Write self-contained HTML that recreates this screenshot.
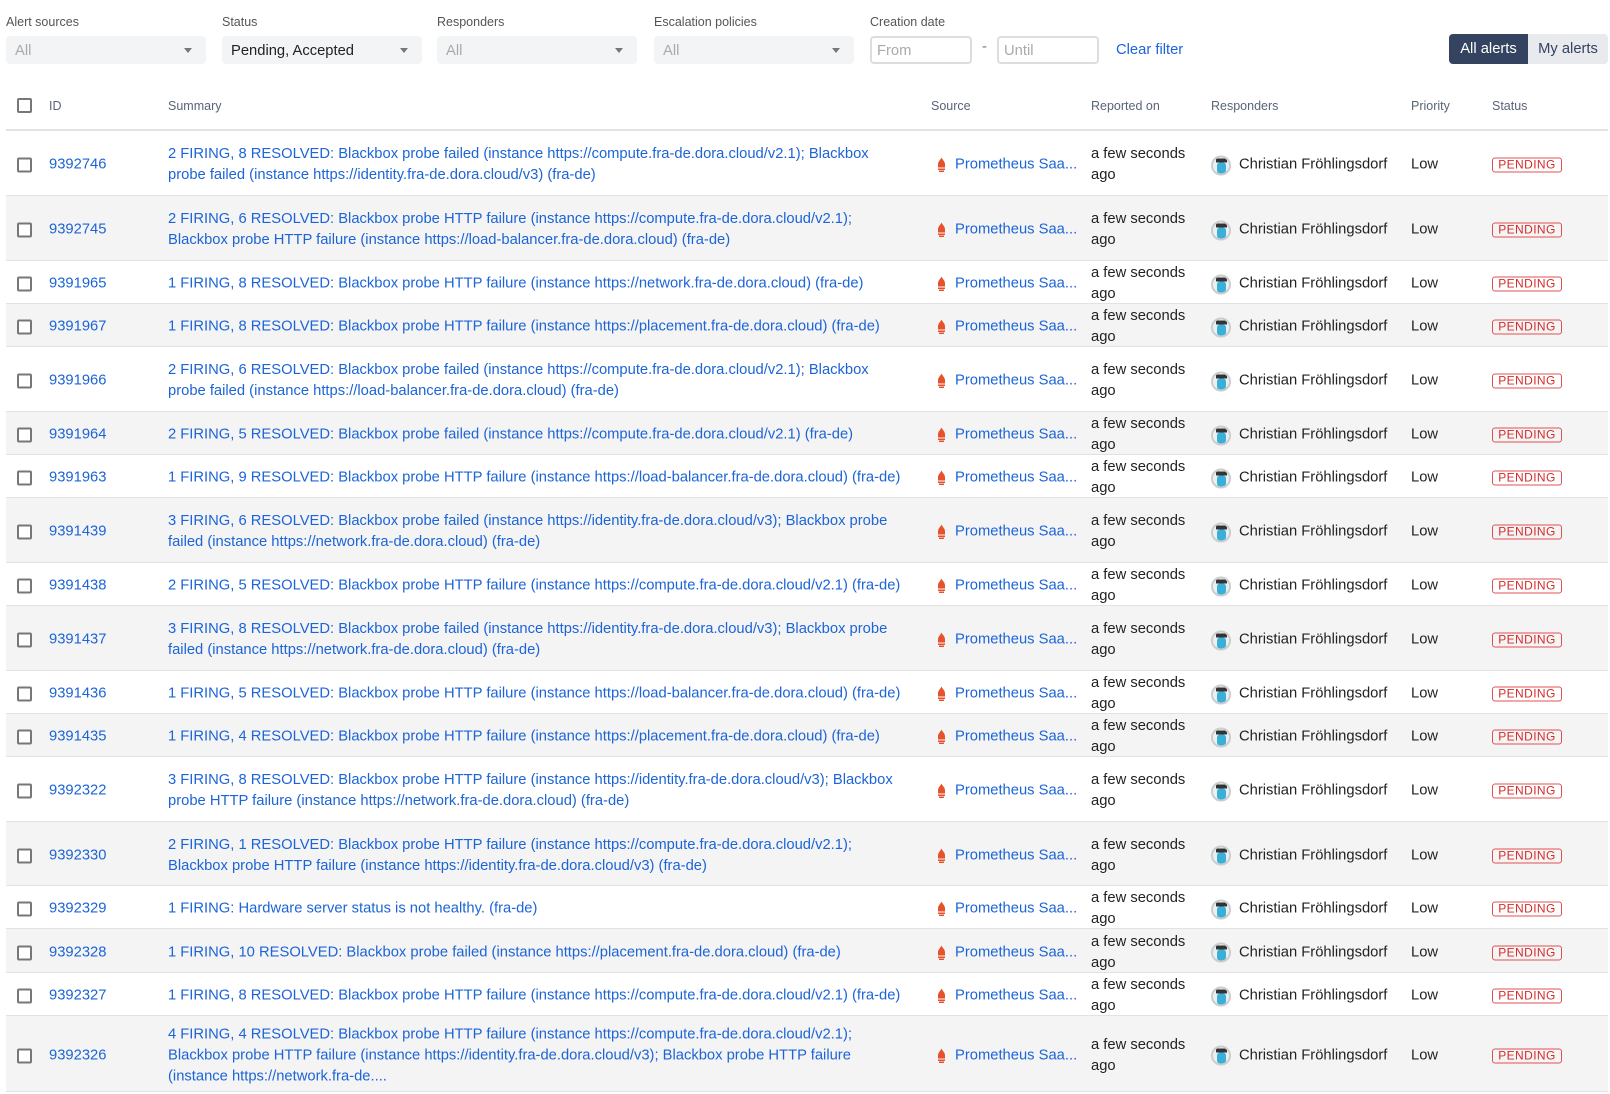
<!DOCTYPE html>
<html><head><meta charset="utf-8">
<style>
*{box-sizing:border-box;margin:0;padding:0}
body{width:1610px;height:1094px;overflow:hidden;background:#fff;font-family:"Liberation Sans",Arial,sans-serif;font-size:14.75px;color:#222;position:relative}
.lbl{position:absolute;top:15px;font-size:12.5px;color:#555}
.dd{position:absolute;top:36px;height:28px;width:200px;background:#f3f4f6;border-radius:4px;padding-left:9px;line-height:30px;color:#aaa}
.dd.v{color:#222}
.dd:after{content:"";position:absolute;right:14px;top:12px;border-left:4.5px solid transparent;border-right:4.5px solid transparent;border-top:5px solid #777}
.inp{position:absolute;top:36px;height:28px;width:102px;border:2px solid #ddd;border-radius:4px;padding-left:5px;line-height:26px;color:#aaa}
.tg{position:absolute;top:34px;height:30px;line-height:31px;text-align:center}
.hd{position:absolute;left:6px;top:80px;width:1602px;height:51px;border-bottom:2px solid #e2e2e2}
.hd span{position:absolute;top:19px;font-size:12.5px;color:#5a6478}
.cb{position:absolute;left:11px;width:15px;height:15px;border:2px solid #777;border-radius:2px;background:#fff}
.row{position:absolute;left:6px;width:1602px;border-bottom:1px solid #e2e2e2}
.row.g{background:#f4f4f4}
.row>div{position:absolute;top:50%;transform:translateY(calc(-50% + 2px));line-height:21px;white-space:nowrap}
.a{color:#1c64d8}
.id{left:43px}
.sm{left:162px}
.src{left:925px}
.rep{left:1085px}
.resp{left:1205px;display:flex;align-items:center}
.pri{left:1405px}
.st{left:1486px}
.badge{display:inline-block;border:1px solid #e05050;color:#d42b2b;border-radius:3px;font-size:12px;line-height:13px;height:15px;width:70px;text-align:center;letter-spacing:.4px}
.av{width:20px;height:20px;border-radius:50%;border:2px solid #ccc;background:#e8f2f6;margin-right:8px;position:relative;overflow:hidden}
.av:before{content:"";position:absolute;left:4px;top:5px;width:9px;height:11px;background:#3ab0d8;border-radius:3px}
.av:after{content:"";position:absolute;left:3px;top:1px;width:11px;height:4px;background:#333}
</style></head><body>
<div class="lbl" style="left:6px">Alert sources</div>
<div class="lbl" style="left:222px">Status</div>
<div class="lbl" style="left:437px">Responders</div>
<div class="lbl" style="left:654px">Escalation policies</div>
<div class="lbl" style="left:870px">Creation date</div>
<div class="dd" style="left:6px">All</div>
<div class="dd v" style="left:222px">Pending, Accepted</div>
<div class="dd" style="left:437px">All</div>
<div class="dd" style="left:654px">All</div>
<div class="inp" style="left:870px">From</div>
<div style="position:absolute;left:982px;top:39px;color:#777">-</div>
<div class="inp" style="left:997px">Until</div>
<div style="position:absolute;left:1116px;top:42px;color:#1c64d8">Clear filter</div>
<div class="tg" style="left:1449px;width:79px;background:#334360;color:#fff;border-radius:4px 0 0 4px">All alerts</div>
<div class="tg" style="left:1528px;width:80px;background:#e9eaee;color:#334360;border-radius:0 4px 4px 0">My alerts</div>
<div class="hd"><div class="cb" style="top:18px"></div><span style="left:43px">ID</span><span style="left:162px">Summary</span><span style="left:925px">Source</span><span style="left:1085px">Reported on</span><span style="left:1205px">Responders</span><span style="left:1405px">Priority</span><span style="left:1486px">Status</span></div>
<div id="rows"></div>
<script>
var R=[
["9392746","2 FIRING, 8 RESOLVED: Blackbox probe failed (instance https://compute.fra-de.dora.cloud/v2.1); Blackbox<br>probe failed (instance https://identity.fra-de.dora.cloud/v3) (fra-de)",65],
["9392745","2 FIRING, 6 RESOLVED: Blackbox probe HTTP failure (instance https://compute.fra-de.dora.cloud/v2.1);<br>Blackbox probe HTTP failure (instance https://load-balancer.fra-de.dora.cloud) (fra-de)",65],
["9391965","1 FIRING, 8 RESOLVED: Blackbox probe HTTP failure (instance https://network.fra-de.dora.cloud) (fra-de)",43],
["9391967","1 FIRING, 8 RESOLVED: Blackbox probe HTTP failure (instance https://placement.fra-de.dora.cloud) (fra-de)",43],
["9391966","2 FIRING, 6 RESOLVED: Blackbox probe failed (instance https://compute.fra-de.dora.cloud/v2.1); Blackbox<br>probe failed (instance https://load-balancer.fra-de.dora.cloud) (fra-de)",65],
["9391964","2 FIRING, 5 RESOLVED: Blackbox probe failed (instance https://compute.fra-de.dora.cloud/v2.1) (fra-de)",43],
["9391963","1 FIRING, 9 RESOLVED: Blackbox probe HTTP failure (instance https://load-balancer.fra-de.dora.cloud) (fra-de)",43],
["9391439","3 FIRING, 6 RESOLVED: Blackbox probe failed (instance https://identity.fra-de.dora.cloud/v3); Blackbox probe<br>failed (instance https://network.fra-de.dora.cloud) (fra-de)",65],
["9391438","2 FIRING, 5 RESOLVED: Blackbox probe HTTP failure (instance https://compute.fra-de.dora.cloud/v2.1) (fra-de)",43],
["9391437","3 FIRING, 8 RESOLVED: Blackbox probe failed (instance https://identity.fra-de.dora.cloud/v3); Blackbox probe<br>failed (instance https://network.fra-de.dora.cloud) (fra-de)",65],
["9391436","1 FIRING, 5 RESOLVED: Blackbox probe HTTP failure (instance https://load-balancer.fra-de.dora.cloud) (fra-de)",43],
["9391435","1 FIRING, 4 RESOLVED: Blackbox probe HTTP failure (instance https://placement.fra-de.dora.cloud) (fra-de)",43],
["9392322","3 FIRING, 8 RESOLVED: Blackbox probe HTTP failure (instance https://identity.fra-de.dora.cloud/v3); Blackbox<br>probe HTTP failure (instance https://network.fra-de.dora.cloud) (fra-de)",65],
["9392330","2 FIRING, 1 RESOLVED: Blackbox probe HTTP failure (instance https://compute.fra-de.dora.cloud/v2.1);<br>Blackbox probe HTTP failure (instance https://identity.fra-de.dora.cloud/v3) (fra-de)",64],
["9392329","1 FIRING: Hardware server status is not healthy. (fra-de)",43],
["9392328","1 FIRING, 10 RESOLVED: Blackbox probe failed (instance https://placement.fra-de.dora.cloud) (fra-de)",44],
["9392327","1 FIRING, 8 RESOLVED: Blackbox probe HTTP failure (instance https://compute.fra-de.dora.cloud/v2.1) (fra-de)",43],
["9392326","4 FIRING, 4 RESOLVED: Blackbox probe HTTP failure (instance https://compute.fra-de.dora.cloud/v2.1);<br>Blackbox probe HTTP failure (instance https://identity.fra-de.dora.cloud/v3); Blackbox probe HTTP failure<br>(instance https://network.fra-de....",76]
];
var y=131,h="";
var ic='<svg width="9" height="15" viewBox="0 0 9 15" style="position:absolute;left:6px;top:3px"><path d="M4.5 0 C5 2 8 3.5 8 7 L8 10 L1 10 L1 7 C1 4 3 3 4.5 0Z" fill="#e6522c"/><rect x="1" y="11" width="7" height="1.5" fill="#e6522c"/><rect x="2" y="13" width="5" height="1.5" fill="#e6522c"/></svg>';
R.forEach(function(r,i){
h+='<div class="row'+(i%2?' g':'')+'" style="top:'+y+'px;height:'+r[2]+'px"><div class="cb" style="left:11px"></div><div class="id a">'+r[0]+'</div><div class="sm a">'+r[1]+'</div><div class="src a" style="padding-left:24px">'+ic+'Prometheus Saa...</div><div class="rep">a few seconds<br>ago</div><div class="resp"><span class="av"></span>Christian Fröhlingsdorf</div><div class="pri">Low</div><div class="st"><span class="badge">PENDING</span></div></div>';
y+=r[2];
});
document.getElementById("rows").innerHTML=h;
</script>
</body></html>
